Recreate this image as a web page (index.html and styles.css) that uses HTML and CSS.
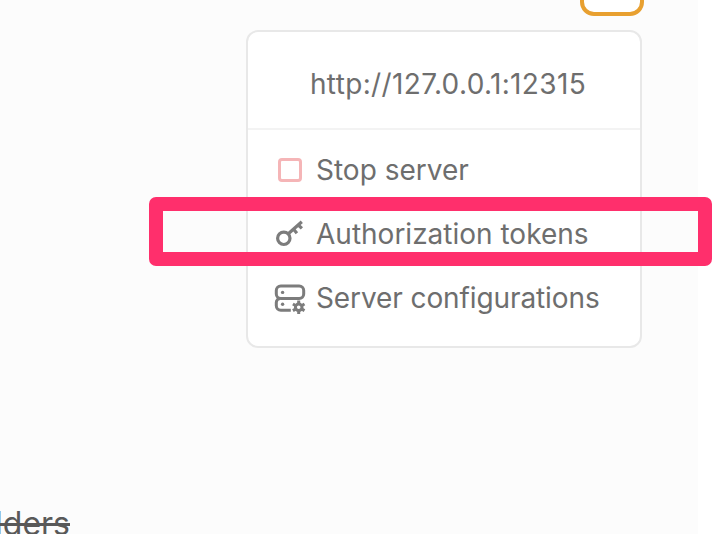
FILE: index.html
```html
<!DOCTYPE html>
<html lang="en">
<head>
<meta charset="utf-8">
<title>Server menu</title>
<link rel="stylesheet" href="styles.css">
</head>
<body>
<main class="page">
  <div class="toolbar"><button class="toggle" aria-label="Server"></button></div>
  <section class="menu">
    <header class="address"><span class="label address-label">http://127.0.0.1:12315</span></header>
    <ul class="items">
      <li class="item">
        <svg class="icon stop" viewBox="0 0 32 32"><rect x="5.5" y="5.5" width="21" height="21" rx="2.5"/></svg>
        <span class="label">Stop server</span>
      </li>
      <li class="item">
        <svg class="icon key" viewBox="0 0 32 32"><circle cx="9.800" cy="20.300" r="6.200"/><path d="M14.300 15.800 27.800 3.700M19.600 11.300l3.300 3.900M24.300 7l3.600 3.400"/></svg>
        <span class="label">Authorization tokens</span>
      </li>
      <li class="item">
        <svg class="icon" viewBox="0 0 32 32"><rect x="2.300" y="3.900" width="27.400" height="12.600" rx="4.500"/><path d="M6 16.500a4 4 0 0 0-3.700 4V23.700a4.500 4.500 0 0 0 4.500 4.500H16.800"/><g class="solid"><circle cx="8.600" cy="10.400" r="1.700"/><circle cx="8.600" cy="22.300" r="1.700"/></g><circle cx="24.700" cy="25.300" r="3.300"/><path d="M24.700 18.600v3M24.700 29v3M18.900 21.950l2.600 1.500M27.900 27.150l2.600 1.500M18.900 28.650l2.600-1.500M27.900 23.450l2.600-1.500"/></svg>
        <span class="label config-label">Server configurations</span>
      </li>
    </ul>
  </section>
  <footer class="foot"><s class="struck">lders</s></footer>
</main>
<div class="highlight"></div>
</body>
</html>
```
FILE: styles.css
```css
* { box-sizing: border-box; }
body {
  margin: 0;
  width: 712px;
  height: 534px;
  overflow: hidden;
  background: #fff;
  color: #6e6e6e;
  font: 28px/34px Inter, "Liberation Sans", sans-serif;
}
.page {
  display: flex;
  flex-direction: column;
  width: 698px;
  height: 534px;
  padding-right: 56px;
  background: #fcfcfc;
  overflow: hidden;
}
.toolbar {
  display: flex;
  justify-content: flex-end;
  align-items: flex-end;
  height: 16px;
  margin-right: -2px;
  flex: none;
}
.toggle {
  width: 64px;
  height: 64px;
  padding: 0;
  border: 4px solid #e8a030;
  border-radius: 14px;
  background: #fff;
}
.menu {
  align-self: flex-end;
  flex: none;
  width: 396px;
  height: 318px;
  margin-top: 14px;
  border: 2px solid #e8e8e8;
  border-radius: 12px;
  background: #fff;
}
.address {
  display: flex;
  align-items: center;
  justify-content: center;
  height: 98px;
  padding: 8px 0 0 8px;
  border-bottom: 2px solid #f3f3f3;
}
.items {
  margin: 0;
  padding: 8px 0 0 26px;
  list-style: none;
}
.item {
  display: flex;
  align-items: center;
  gap: 10px;
  height: 64px;
}
.label { white-space: nowrap; }
.address-label { letter-spacing: 0.36px; }
.config-label { letter-spacing: -0.1px; }
.icon {
  flex: none;
  width: 32px;
  height: 32px;
  overflow: visible;
  fill: none;
  stroke: #7c7c7c;
  stroke-width: 3;
}
.key { stroke-width: 3.2; }
.stop { stroke: #f5b5b7; }
.solid { fill: #7c7c7c; stroke: none; }
.foot {
  display: flex;
  justify-content: flex-end;
  width: 70px;
  margin-top: 159px;
  color: #595959;
  font-size: 32px;
}
.struck { text-decoration-thickness: 3px; }
.highlight {
  position: absolute;
  left: 149px;
  top: 197px;
  width: 563px;
  height: 69px;
  border: 14px solid #ff2f6c;
  border-radius: 7px;
}
```
